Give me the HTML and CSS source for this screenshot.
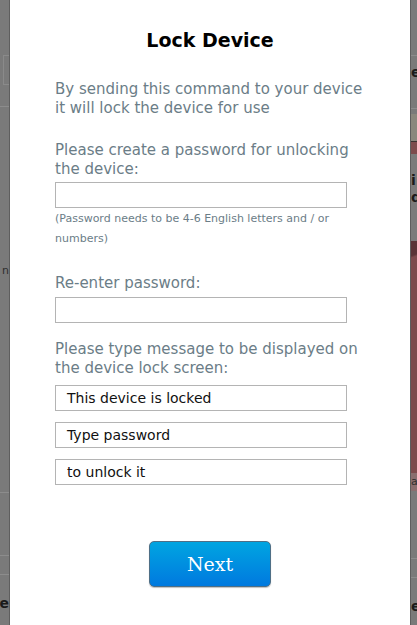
FILE: index.html
```html
<!DOCTYPE html>
<html>
<head>
<meta charset="utf-8">
<link rel="stylesheet" href="styles.css">
</head>
<body>
<div class="page">
  <div class="side side-left">
    <div class="gap" style="height:55px"></div>
    <div class="lbox"></div>
    <div class="gap" style="height:21px"></div>
    <div class="hline"></div>
    <div class="gap" style="height:157px"></div>
    <div class="stxt left-txt">n :</div>
    <div class="gap" style="height:214px"></div>
    <div class="hline"></div>
    <div class="gap" style="height:62px"></div>
    <div class="hline"></div>
    <div class="gap" style="height:18px"></div>
    <div class="hline"></div>
    <div class="gap" style="height:20px"></div>
    <div class="btxt left-txt">ce</div>
  </div>

  <div class="modal">
    <h1 class="title">Lock Device</h1>
    <p class="text intro">By sending this command to your device it will lock the device for use</p>
    <p class="text label-create">Please create a password for unlocking the device:</p>
    <div class="field field-first"></div>
    <p class="hint">(Password needs to be 4-6 English letters and / or numbers)</p>
    <p class="text label-reenter">Re-enter password:</p>
    <div class="field field-second"></div>
    <p class="text label-msg">Please type message to be displayed on the device lock screen:</p>
    <div class="messages">
      <div class="field msg">This device is locked</div>
      <div class="field msg">Type password</div>
      <div class="field msg">to unlock it</div>
    </div>
    <div class="actions">
      <button class="next">Next</button>
    </div>
  </div>

  <div class="side side-right">
    <div class="gap" style="height:55px"></div>
    <div class="hline"></div>
    <div class="gap" style="height:8px"></div>
    <div class="btxt">e</div>
    <div class="gap" style="height:27px"></div>
    <div class="hline"></div>
    <div class="gap" style="height:5px"></div>
    <div class="beige"></div>
    <div class="darkline"></div>
    <div class="red" style="height:12px"></div>
    <div class="gray-block">
      <div class="btxt">i</div>
      <div class="btxt">de</div>
    </div>
    <div class="red red-big"></div>
    <div class="pink"><span class="stxt">ap</span></div>
    <div class="gap" style="height:67px"></div>
    <div class="hline"></div>
    <div class="gap" style="height:18px"></div>
    <div class="hline"></div>
    <div class="gap" style="height:20px"></div>
    <div class="btxt">ev</div>
  </div>
</div>
</body>
</html>
```

FILE: styles.css
```css
html, body {
  margin: 0;
  padding: 0;
  height: 625px;
  overflow: hidden;
  background: #7a7a7a;
}

.page {
  display: flex;
  height: 625px;
}

.side {
  display: flex;
  flex-direction: column;
  overflow: hidden;
  background: #7a7a7a;
  font-family: "DejaVu Sans", sans-serif;
}

.side-left {
  width: 9px;
  border-right: 1px solid #5e5e5e;
}

.side-right {
  width: 6px;
  border-left: 1px solid #5e5e5e;
}

.gap { flex: none; }

.lbox {
  flex: none;
  height: 28px;
  margin-left: 3px;
  border: 1px solid #8a8a8a;
  border-right: none;
}

.hline {
  flex: none;
  height: 1px;
  background: #8c8c8c;
}

.stxt {
  flex: none;
  font-size: 11px;
  line-height: 14px;
  color: #2e2e2e;
  white-space: nowrap;
}

.btxt {
  flex: none;
  font-size: 14px;
  font-weight: bold;
  line-height: 17px;
  color: #1b1b1b;
  white-space: nowrap;
}

.left-txt {
  direction: rtl;
  text-align: left;
}

.beige {
  flex: none;
  height: 27px;
  background: #8a877d;
}

.darkline {
  flex: none;
  height: 1px;
  background: #3a3030;
}

.red {
  flex: none;
  background: #7d4b4d;
}

.red-big {
  height: 232px;
  background: linear-gradient(160deg, #5a3437 0, #5a3437 14px, #7d4b4d 16px);
}

.gray-block {
  flex: none;
  height: 87px;
  padding-top: 18px;
  box-sizing: border-box;
  background: #7b7b7b;
}

.pink {
  flex: none;
  height: 18px;
  background: #8a6e6f;
  display: flex;
  align-items: center;
}

.modal {
  width: 400px;
  flex: none;
  box-sizing: border-box;
  background: #ffffff;
  padding: 28px 45px 0 45px;
  display: flex;
  flex-direction: column;
}

.title {
  margin: 0;
  font-family: "DejaVu Sans", sans-serif;
  font-weight: bold;
  font-size: 19px;
  line-height: 24px;
  color: #000;
  text-align: center;
}

.text {
  margin: 0;
  width: 310px;
  font-family: "DejaVu Sans", sans-serif;
  font-size: 15px;
  line-height: 19px;
  color: #6b7d87;
}

.intro { margin-top: 28px; }
.label-create { margin-top: 23px; }
.label-reenter { margin-top: 25px; }
.label-msg { margin-top: 17px; }

.field {
  width: 292px;
  height: 26px;
  box-sizing: border-box;
  border: 1px solid #b4b4b4;
  background: #fff;
}

.field-first { margin-top: 3px; }
.field-second { margin-top: 4px; }

.hint {
  margin: 1px 0 0 0;
  width: 310px;
  font-family: "DejaVu Sans", sans-serif;
  font-size: 11px;
  line-height: 20px;
  color: #6b7d87;
}

.messages {
  margin-top: 7px;
  display: flex;
  flex-direction: column;
  gap: 11px;
}

.msg {
  padding-left: 11px;
  font-family: "DejaVu Sans", sans-serif;
  font-size: 14px;
  line-height: 24px;
  color: #111;
}

.actions {
  margin-top: 56px;
  display: flex;
  justify-content: center;
}

.next {
  width: 122px;
  height: 46px;
  box-sizing: border-box;
  border: 1px solid #4f6f86;
  border-radius: 5px;
  background: linear-gradient(#00a5e1, #0079df);
  box-shadow: 0 1px 1px rgba(0,0,0,0.25);
  color: #fff;
  font-family: "DejaVu Serif", serif;
  font-size: 19px;
  padding: 0;
}
```
